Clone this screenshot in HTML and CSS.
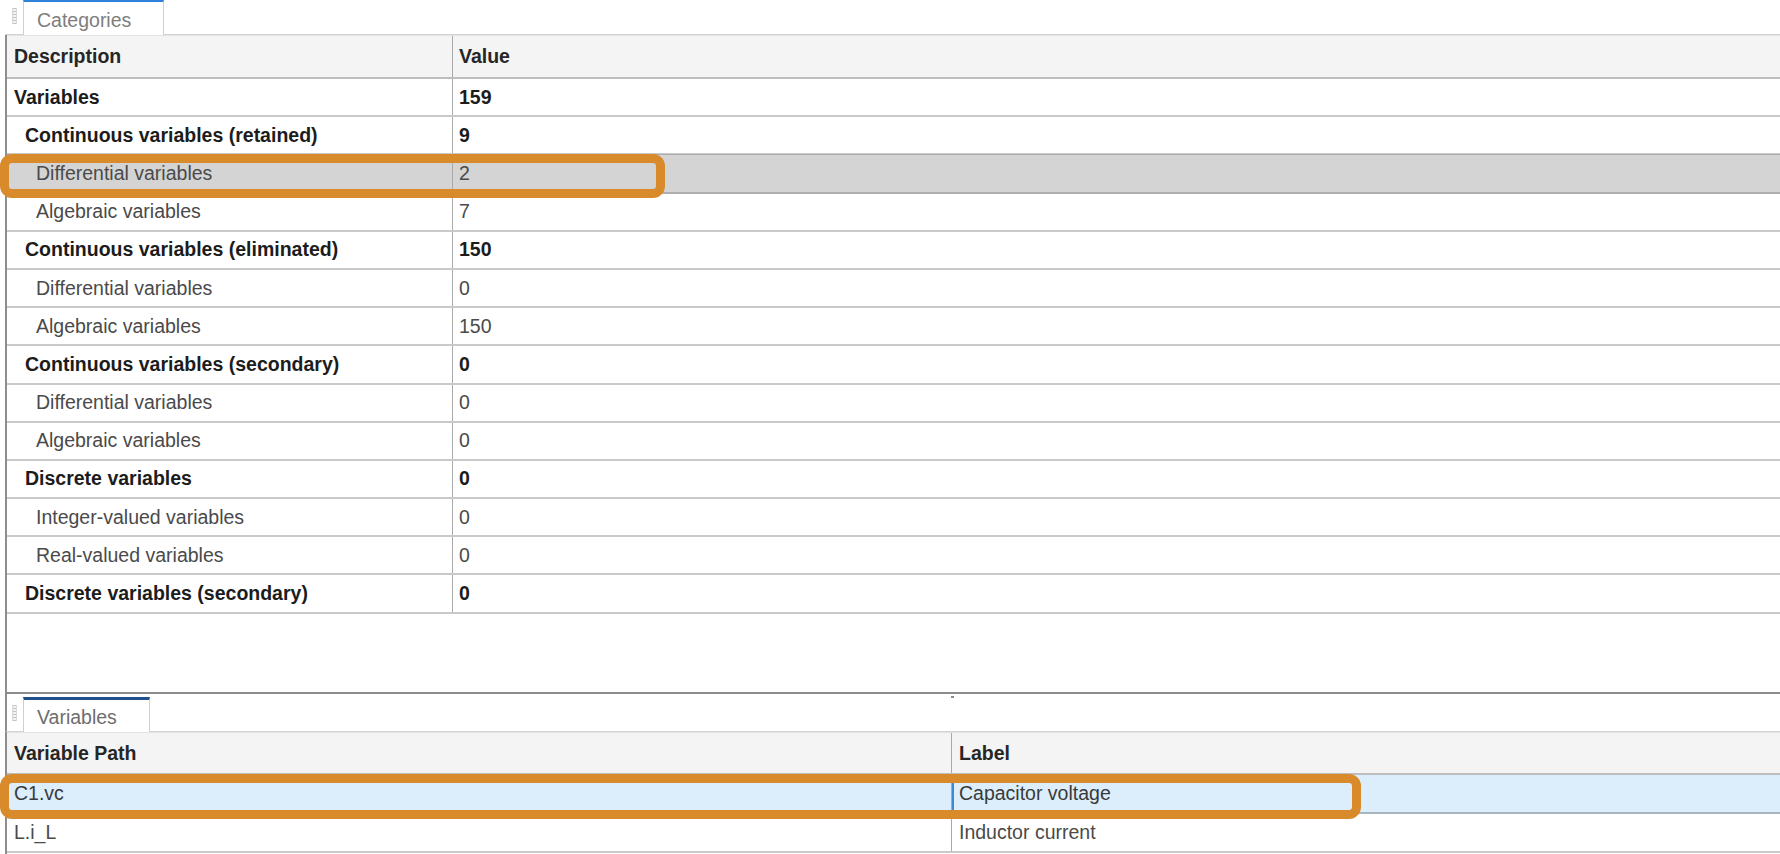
FILE: index.html
```html
<!DOCTYPE html>
<html>
<head>
<meta charset="utf-8">
<link rel="stylesheet" href="styles.css">
</head>
<body>
<div class="app">
  <div class="pane pane-top">
    <div class="tabstrip">
      <span class="grip"></span>
      <div class="tab tab-light">Categories</div>
    </div>
    <div class="pane-body">
      <div class="grid grid-top">
        <div class="row head"><div class="cell c1">Description</div><div class="cell c2">Value</div></div>
        <div class="row bold"><div class="cell c1 l0">Variables</div><div class="cell c2">159</div></div>
        <div class="row bold"><div class="cell c1 l1">Continuous variables (retained)</div><div class="cell c2">9</div></div>
        <div class="row sel-gray"><div class="cell c1 l2">Differential variables</div><div class="cell c2">2</div><div class="hl hl-top"></div></div>
        <div class="row"><div class="cell c1 l2">Algebraic variables</div><div class="cell c2">7</div></div>
        <div class="row bold"><div class="cell c1 l1">Continuous variables (eliminated)</div><div class="cell c2">150</div></div>
        <div class="row"><div class="cell c1 l2">Differential variables</div><div class="cell c2">0</div></div>
        <div class="row"><div class="cell c1 l2">Algebraic variables</div><div class="cell c2">150</div></div>
        <div class="row bold"><div class="cell c1 l1">Continuous variables (secondary)</div><div class="cell c2">0</div></div>
        <div class="row"><div class="cell c1 l2">Differential variables</div><div class="cell c2">0</div></div>
        <div class="row"><div class="cell c1 l2">Algebraic variables</div><div class="cell c2">0</div></div>
        <div class="row bold"><div class="cell c1 l1">Discrete variables</div><div class="cell c2">0</div></div>
        <div class="row"><div class="cell c1 l2">Integer-valued variables</div><div class="cell c2">0</div></div>
        <div class="row"><div class="cell c1 l2">Real-valued variables</div><div class="cell c2">0</div></div>
        <div class="row bold"><div class="cell c1 l1">Discrete variables (secondary)</div><div class="cell c2">0</div></div>
      </div>
    </div>
  </div>
  <div class="splitter"><span class="split-dot"></span></div>
  <div class="pane pane-bottom">
    <div class="tabstrip tabstrip-bottom">
      <span class="grip"></span>
      <div class="tab tab-dark">Variables</div>
    </div>
    <div class="grid grid-bottom">
      <div class="row head"><div class="cell c1 b1">Variable Path</div><div class="cell c2 b2">Label</div></div>
      <div class="row sel-blue"><div class="cell c1 b1 focus">C1.vc</div><div class="cell c2 b2 focus">Capacitor voltage</div><div class="hl hl-bottom"></div></div>
      <div class="row"><div class="cell c1 b1">L.i_L</div><div class="cell c2 b2">Inductor current</div></div>
    </div>
  </div>
</div>
</body>
</html>
```
FILE: styles.css
```css
html, body {
  margin: 0;
  padding: 0;
  background: #ffffff;
}
body {
  width: 1780px;
  height: 854px;
  overflow: hidden;
  font-family: "Liberation Sans", Arial, sans-serif;
  font-size: 19.5px;
  color: #4a4a4a;
}
.app {
  display: flex;
  flex-direction: column;
  height: 854px;
  padding-left: 5px;
  box-sizing: border-box;
}
.pane-top {
  height: 692px;
  display: flex;
  flex-direction: column;
}
.tabstrip {
  height: 35px;
  box-sizing: border-box;
  border-bottom: 1px solid #d4d4d4;
  display: flex;
  align-items: flex-end;
  padding-left: 7px;
}
.tabstrip-bottom {
  height: 38px;
  border-left: 2px solid #8e8e8e;
  padding-left: 5px;
}
.grip {
  width: 5px;
  height: 16px;
  align-self: flex-start;
  margin-top: 8px;
  margin-right: 6px;
  background: repeating-linear-gradient(to bottom, #c4c4c4 0 1px, #f2f2f2 1px 3px);
  border-left: 1px solid #d8d8d8;
  border-right: 1px solid #d8d8d8;
  box-sizing: border-box;
}
.tabstrip-bottom .grip {
  margin-top: 11px;
}
.tab {
  height: 35px;
  box-sizing: border-box;
  margin-bottom: -1px;
  background: #ffffff;
  border-left: 1px solid #d0d0d0;
  border-right: 1px solid #d0d0d0;
  display: flex;
  align-items: center;
  padding: 3px 32px 0 13px;
  color: #7e7e7e;
}
.tab-light {
  border-top: 2px solid #2f80d8;
}
.tab-dark {
  border-top: 3px solid #1f4f8c;
  color: #6e6e6e;
}
.pane-body {
  flex: 1;
  border-left: 2px solid #8e8e8e;
}
.splitter {
  height: 2px;
  background: #8c8c8c;
  position: relative;
}
.split-dot {
  position: absolute;
  left: 946px;
  top: 4px;
  width: 3px;
  height: 2px;
  background: #888888;
}
.pane-bottom {
  flex: 1;
  display: flex;
  flex-direction: column;
}
.grid-bottom {
  flex: 1;
  border-left: 2px solid #8e8e8e;
}
.row {
  display: grid;
  grid-template-columns: 446px 1fr;
  height: 38.2px;
  box-sizing: border-box;
  border-bottom: 2px solid #c9c9c9;
  position: relative;
}
.grid-bottom .row {
  grid-template-columns: 945px 1fr;
  height: 39px;
}
.row.head {
  height: 44px;
  background: #f4f4f4;
  border-top: 1px solid #e2e2e2;
  border-bottom: 2px solid #bdbdbd;
  font-weight: bold;
  color: #262626;
}
.grid-bottom .row.head {
  height: 43px;
}
.cell {
  display: flex;
  align-items: center;
  white-space: nowrap;
  overflow: hidden;
  box-sizing: border-box;
}
.c1 {
  border-right: 1px solid #a9a9a9;
  padding-left: 7px;
}
.c2 {
  padding-left: 6px;
}
.l0 { padding-left: 7px; }
.l1 { padding-left: 18px; }
.l2 { padding-left: 29px; }
.b1 { padding-left: 7px; }
.b2 { padding-left: 7px; }
.row.bold {
  font-weight: bold;
  color: #1c1c1c;
}
.sel-gray {
  background: #d4d4d4;
  border-top: 1px solid #acacac;
  margin-top: -1px;
  height: 39.2px;
  border-bottom-color: #aeaeae;
}
.sel-blue {
  background: #dcedfc;
  color: #3a3a3a;
  border-bottom-color: #a9b4be;
}
.focus {
  box-shadow: inset 2px 0 0 #3c87d8;
}
.hl {
  position: absolute;
  left: -7px;
  box-sizing: border-box;
  border: 9px solid #d98a2b;
  border-radius: 12px;
  pointer-events: none;
  z-index: 2;
}
.hl-top {
  top: -1px;
  width: 665px;
  height: 44px;
}
.hl-bottom {
  top: -1px;
  width: 1361px;
  height: 45px;
}
```
